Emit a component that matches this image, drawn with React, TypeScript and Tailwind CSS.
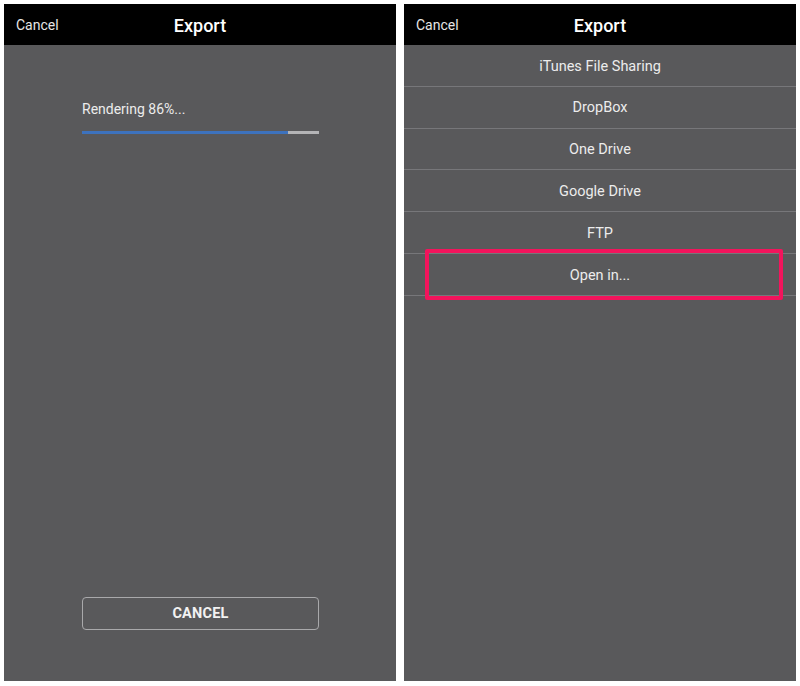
import React from "react";

const font = { fontFamily: "Roboto, Inter, 'Liberation Sans', Arial, sans-serif" };

function Header() {
  return (
    <div className="relative flex h-[41px] items-center justify-center bg-black">
      <span className="absolute left-[12px] top-[11px] text-[14px] text-[#e6e6e6]">Cancel</span>
      <span className="mt-[1px] text-[18px] font-medium text-white">Export</span>
    </div>
  );
}

const items = ["iTunes File Sharing", "DropBox", "One Drive", "Google Drive", "FTP", "Open in..."];

export default function App() {
  return (
    <div className="flex h-[686px] w-[800px] gap-[8px] bg-white px-[4px] pb-[5px] pt-[4px]" style={font}>
      <div className="flex w-[392px] flex-col bg-[#59595b]">
        <Header />
        <div className="flex flex-1 flex-col px-[78px]">
          <div className="mt-[54px] text-[14px] text-[#ececec]">Rendering 86%...</div>
          <div className="mt-[11px] flex h-[3px] w-[237px]">
            <div className="h-full w-[206px] bg-[#3d72bd]" />
            <div className="h-full flex-1 bg-[#b4b4b6]" />
          </div>
          <div className="flex-1" />
          <div className="mb-[51px] flex h-[33px] w-[237px] items-center justify-center rounded-[4px] border border-[#a9a9ab] pt-[1px] text-[14.5px] font-bold tracking-[0.2px] text-[#f2f2f2]">
            CANCEL
          </div>
        </div>
      </div>
      <div className="flex w-[392px] flex-col bg-[#59595b]">
        <Header />
        <div className="flex flex-col">
          {items.map((it, i) => (
            <div
              key={it}
              className="relative flex h-[41.8px] items-center justify-center border-b border-[#77777a] pt-[2px] text-[14.5px] text-[#ececec]"
            >
              {it}
              {i === items.length - 1 && (
                <div className="absolute left-[21px] top-[-5px] h-[51px] w-[358px] rounded-[2px] border-[4px] border-[#f2145c]" />
              )}
            </div>
          ))}
        </div>
      </div>
    </div>
  );
}
